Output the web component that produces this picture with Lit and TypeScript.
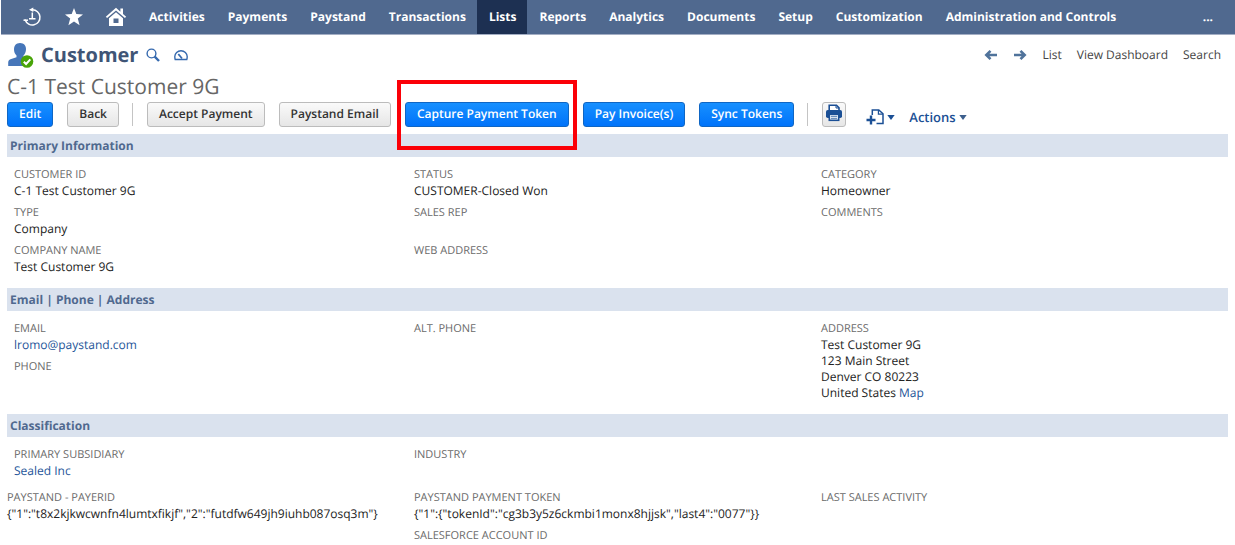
import { LitElement, html, css, svg, nothing } from "lit";
import { customElement, property } from "lit/decorators.js";
import { classMap } from "lit/directives/class-map.js";

interface Field {
  label: string;
  lines?: string[];
  link?: boolean;
  mapLink?: boolean;
}

const NAV = [
  "Activities",
  "Payments",
  "Paystand",
  "Transactions",
  "Lists",
  "Reports",
  "Analytics",
  "Documents",
  "Setup",
  "Customization",
  "Administration and Controls",
];

const PRIMARY: Field[][] = [
  [
    { label: "Customer ID", lines: ["C-1 Test Customer 9G"] },
    { label: "Type", lines: ["Company"] },
    { label: "Company Name", lines: ["Test Customer 9G"] },
  ],
  [
    { label: "Status", lines: ["CUSTOMER-Closed Won"] },
    { label: "Sales Rep" },
    { label: "Web Address" },
  ],
  [{ label: "Category", lines: ["Homeowner"] }, { label: "Comments" }],
];

const CONTACT: Field[][] = [
  [{ label: "Email", lines: ["lromo@paystand.com"], link: true }, { label: "Phone" }],
  [{ label: "Alt. Phone" }],
  [
    {
      label: "Address",
      lines: ["Test Customer 9G", "123 Main Street", "Denver CO 80223", "United States "],
      mapLink: true,
    },
  ],
];

const CLASSIFICATION: Field[][] = [
  [{ label: "Primary Subsidiary", lines: ["Sealed Inc"], link: true }],
  [{ label: "Industry" }],
  [],
];

const CUSTOM: Field[][] = [
  [
    {
      label: "Paystand - PayerID",
      lines: ['{"1":"t8x2kjkwcwnfn4lumtxfikjf","2":"futdfw649jh9iuhb087osq3m"}'],
    },
  ],
  [
    {
      label: "Paystand Payment Token",
      lines: ['{"1":{"tokenId":"cg3b3y5z6ckmbi1monx8hjjsk","last4":"0077"}}'],
    },
    { label: "Salesforce Account ID" },
  ],
  [{ label: "Last Sales Activity" }],
];

@customElement("nav-bar")
class NavBar extends LitElement {
  static styles = css`
    :host {
      display: block;
    }
    .bar {
      display: flex;
      height: 34px;
      margin-left: 1px;
      padding: 0 11px 0 10px;
      background: #50698f;
      border-bottom: 1px solid #a3aec4;
      box-sizing: content-box;
    }
    .link {
      display: flex;
      align-items: center;
      padding: 0 11px 0 12px;
      color: #fff;
      font-weight: 700;
      font-size: 12px;
      line-height: 16px;
      text-decoration: none;
      white-space: nowrap;
    }
    .icon {
      flex: 0 0 42px;
      padding: 0;
      justify-content: center;
    }
    .active {
      background: #1d3052;
    }
    .more {
      margin-left: auto;
    }
  `;

  render() {
    return html`
      <nav class="bar" aria-label="Main">
        <a class="link icon" href="#" aria-label="Recent records">
          <svg width="20" height="20" viewBox="0 0 20 20" fill="none" stroke="#fff" stroke-width="1.5">
            <path d="M10.500 2.800A7.600 7.600 0 1 1 3.200 13" stroke-linecap="round" />
            <path d="M1.500 13.200h4.500" />
            <path d="M10.300 5.500v6.200M7 11.700h6.500" />
            <path d="M7 2.700L11.300.6v4.400z" fill="#fff" stroke="none" />
          </svg>
        </a>
        <a class="link icon" href="#" aria-label="Shortcuts">
          <svg width="20" height="20" viewBox="0 0 20 20" fill="#fff">
            <path d="M10 1l2.300 6.100 6.700.3-5.200 4.200 1.800 6.600-5.600-3.700-5.600 3.700 1.800-6.600L1 7.400l6.700-.3z" />
          </svg>
        </a>
        <a class="link icon" href="#" aria-label="Home">
          <svg width="22" height="20" viewBox="0 0 22 20" fill="#fff">
            <path d="M11 .8L.8 9.700l1.300 1.400L11 3.400l8.900 7.700 1.300-1.400-3.200-2.800V1.500h-2.600v3.200z" />
            <path fill-rule="evenodd" d="M11 5.200L4 11.200V19h14v-7.800zM8.500 11.500h5v4.500h-5z" />
          </svg>
        </a>
        ${NAV.map(
          (n) => html`<a class=${classMap({ link: true, active: n === "Lists" })} href="#">${n}</a>`
        )}
        <a class="link more" href="#" aria-label="More">...</a>
      </nav>
    `;
  }
}

@customElement("record-section")
class RecordSection extends LitElement {
  @property() heading = "";
  @property({ attribute: false }) columns: Field[][] = [];
  @property({ type: Boolean }) flush = false;

  static styles = css`
    :host {
      display: block;
    }
    .heading {
      margin: 0;
      padding: 0 3px;
      background: #dae2ee;
      color: #50698f;
      font-size: 12px;
      font-weight: 700;
      line-height: 23px;
    }
    .grid {
      display: grid;
      grid-template-columns: repeat(3, minmax(0, 1fr));
      padding: 10px 0 13px;
    }
    .grid.flush {
      padding: 0;
      margin-top: -2px;
    }
    .column {
      display: flex;
      flex-direction: column;
      gap: 6px;
      margin: 0;
    }
    .grid:not(.flush) .column:first-child {
      padding-left: 7px;
    }
    .field:not(:last-child) {
      min-height: 32px;
    }
    .label {
      color: #6a6a6a;
      font-size: 11px;
      line-height: 16px;
      text-transform: uppercase;
    }
    .value {
      margin: 0;
      color: #222;
      font-size: 12px;
      line-height: 16px;
      white-space: nowrap;
    }
    .link {
      color: #255599;
      text-decoration: none;
    }
  `;

  private field(f: Field) {
    const lines = f.lines ?? [];
    return html`
      <div class="field">
        <dt class="label">${f.label}</dt>
        ${lines.map(
          (l, i) => html`<dd class="value">${f.link ? html`<a class="link" href="#">${l}</a>` : l}${f.mapLink &&
          i === lines.length - 1
            ? html`<a class="link" href="#">Map</a>`
            : nothing}</dd>`
        )}
      </div>
    `;
  }

  render() {
    return html`
      ${this.heading ? html`<h2 class="heading">${this.heading}</h2>` : nothing}
      <div class=${classMap({ grid: true, flush: this.flush })}>
        ${this.columns.map((c) => html`<dl class="column">${c.map((f) => this.field(f))}</dl>`)}
      </div>
    `;
  }
}

const caret = (color: string) =>
  html`<svg width="8" height="5" viewBox="0 0 8 5"><path d="M.3 0h7.400L4 5z" fill=${color} /></svg>`;

const arrow = (path: unknown) =>
  html`<svg width="14" height="12" viewBox="0 0 14 12" fill="none" stroke="#50739b" stroke-width="2.600">${path}</svg>`;

@customElement("app-root")
class AppRoot extends LitElement {
  static styles = css`
    :host {
      display: block;
      background: #fff;
      font-family: "Open Sans", "Noto Sans", sans-serif;
      font-size: 12px;
      text-rendering: geometricPrecision;
    }
    .page {
      padding: 0 7px;
    }
    .top {
      display: flex;
      align-items: center;
      justify-content: space-between;
      height: 40px;
    }
    .title,
    .links {
      display: flex;
      align-items: center;
    }
    .type {
      margin: 0 8px 0 7px;
      color: #3f5576;
      font-size: 20px;
      font-weight: 700;
      line-height: 28px;
    }
    .glyph {
      display: flex;
      margin-right: 14px;
    }
    .links {
      gap: 15px;
      padding-right: 7px;
    }
    .toplink {
      display: flex;
      color: #444;
      font-size: 12px;
      line-height: 16px;
      text-decoration: none;
    }
    .name {
      margin: 0;
      color: #666;
      font-size: 21px;
      font-weight: 400;
      line-height: 24px;
    }
    .toolbar {
      display: flex;
      align-items: center;
      gap: 14px;
      height: 30px;
      padding-bottom: 5px;
    }
    .button {
      height: 25px;
      padding: 0 11px;
      border: 1px solid #bcbcbc;
      border-radius: 3px;
      background: linear-gradient(#fafafa, #e6e6e6);
      color: #333;
      font-family: inherit;
      font-size: 12px;
      font-weight: 600;
      line-height: 16px;
      white-space: nowrap;
      text-rendering: inherit;
    }
    .primary {
      border-color: #0f66c4;
      background: linear-gradient(#1790ff, #0073fa);
      color: #fff;
    }
    .square {
      display: flex;
      align-items: center;
      justify-content: center;
      width: 24px;
      padding: 0 0 2px;
    }
    .separator {
      width: 1px;
      height: 23px;
      margin-left: -1px;
      background: #c4c4c4;
    }
    .marked {
      position: relative;
      display: flex;
    }
    .marked::after {
      content: "";
      position: absolute;
      inset: -22px -8px -23px;
      border: 4px solid #fb0007;
      pointer-events: none;
    }
    .menu {
      display: flex;
      align-items: center;
      gap: 3px;
      padding: 6px 0 0;
      border: 0;
      background: none;
      color: #1b4f95;
      font-family: inherit;
      font-size: 13px;
      font-weight: 600;
      line-height: 18px;
      text-rendering: inherit;
    }
    .create {
      margin-left: 6px;
    }
  `;

  render() {
    return html`
      <nav-bar></nav-bar>
      <main class="page">
        <header class="top">
          <div class="title">
            <svg width="27" height="27" viewBox="0 0 27 27">
              <path d="M13 1c4 0 6 2.800 6 6.200 0 3-1.300 5-2.500 6.300v2.300l6 2.200V24H1.200v-3.500c0-2 1-3 3-3.600l5.300-1.600v-1.800C8 12 7 10.200 7 7.200 7 3.800 9 1 13 1z" fill="#4676b9" />
              <circle cx="20" cy="19.500" r="6.300" fill="#48a408" />
              <path d="M16.800 19.700l2.300 2.300 4.200-4.600" fill="none" stroke="#fff" stroke-width="2" />
            </svg>
            <h1 class="type">Customer</h1>
            <a class="glyph" href="#" aria-label="Find record">
              <svg width="14" height="14" viewBox="0 0 14 14" fill="none" stroke="#3569ae">
                <circle cx="5.500" cy="5.500" r="4.400" stroke-width="1.400" />
                <path d="M8.700 8.700L13 13" stroke-width="2.400" />
              </svg>
            </a>
            <a class="glyph" href="#" aria-label="Dashboard">
              <svg width="14" height="12" viewBox="0 0 14 12" fill="none" stroke="#3569ae" stroke-width="1.400">
                <path d="M1.200 10.500C.9 9.500.8 8.500.8 7.500a6.200 5.800 0 0 1 12.400 0c0 1-.1 2-.4 3z" />
                <path d="M4.300 5L8 9.500" stroke-width="1.800" />
              </svg>
            </a>
          </div>
          <nav class="links" aria-label="Record">
            <a class="toplink" href="#" aria-label="Previous">${arrow(svg`<path d="M6.500 1.800L2.300 6l4.200 4.200M2.500 6H13" />`)}</a>
            <a class="toplink" href="#" aria-label="Next">${arrow(svg`<path d="M7.500 1.800L11.700 6l-4.200 4.200M11.500 6H1" />`)}</a>
            <a class="toplink" href="#">List</a>
            <a class="toplink" href="#">View Dashboard</a>
            <a class="toplink" href="#">Search</a>
          </nav>
        </header>
        <p class="name">C-1 Test Customer 9G</p>
        <div class="toolbar">
          <button class="button primary">Edit</button>
          <button class="button">Back</button>
          <span class="separator"></span>
          <button class="button">Accept Payment</button>
          <button class="button">Paystand Email</button>
          <span class="marked"><button class="button primary">Capture Payment Token</button></span>
          <button class="button primary">Pay Invoice(s)</button>
          <button class="button primary">Sync Tokens</button>
          <span class="separator"></span>
          <button class="button square" aria-label="Print">
            <svg width="18" height="18" viewBox="0 0 18 18">
              <path d="M4.200 6V1.200h7.300l2.500 2.600V6" fill="#fff" stroke="#1b4f95" stroke-width="1.600" />
              <path d="M11 1v3h3" fill="none" stroke="#1b4f95" />
              <rect x="1" y="6" width="16" height="8" rx="1.800" fill="#1b4f95" />
              <rect x="4.300" y="10.300" width="9.400" height="6" fill="#fff" stroke="#1b4f95" stroke-width="1.600" />
              <path d="M5.800 12.300h6.400M5.800 14.300h6.400" stroke="#1b4f95" stroke-width=".8" />
            </svg>
          </button>
          <button class="menu create" aria-label="Create new">
            <svg width="18" height="16" viewBox="0 0 18 16" fill="none" stroke="#1b4f95">
              <path d="M6.300 6V1h6.500L17 4.800V14.600h-6.500" stroke-width="1.500" />
              <path d="M12.400 1v4.200H17" stroke-width="1.200" />
              <path d="M5 6.500v9M.5 11h9" stroke-width="2.400" />
            </svg>
            ${caret("#1b4f95")}
          </button>
          <button class="menu">Actions ${caret("#3d5f8d")}</button>
        </div>
        <record-section heading="Primary Information" .columns=${PRIMARY}></record-section>
        <record-section heading="Email | Phone | Address" .columns=${CONTACT}></record-section>
        <record-section heading="Classification" .columns=${CLASSIFICATION}></record-section>
        <record-section flush .columns=${CUSTOM}></record-section>
      </main>
    `;
  }
}
